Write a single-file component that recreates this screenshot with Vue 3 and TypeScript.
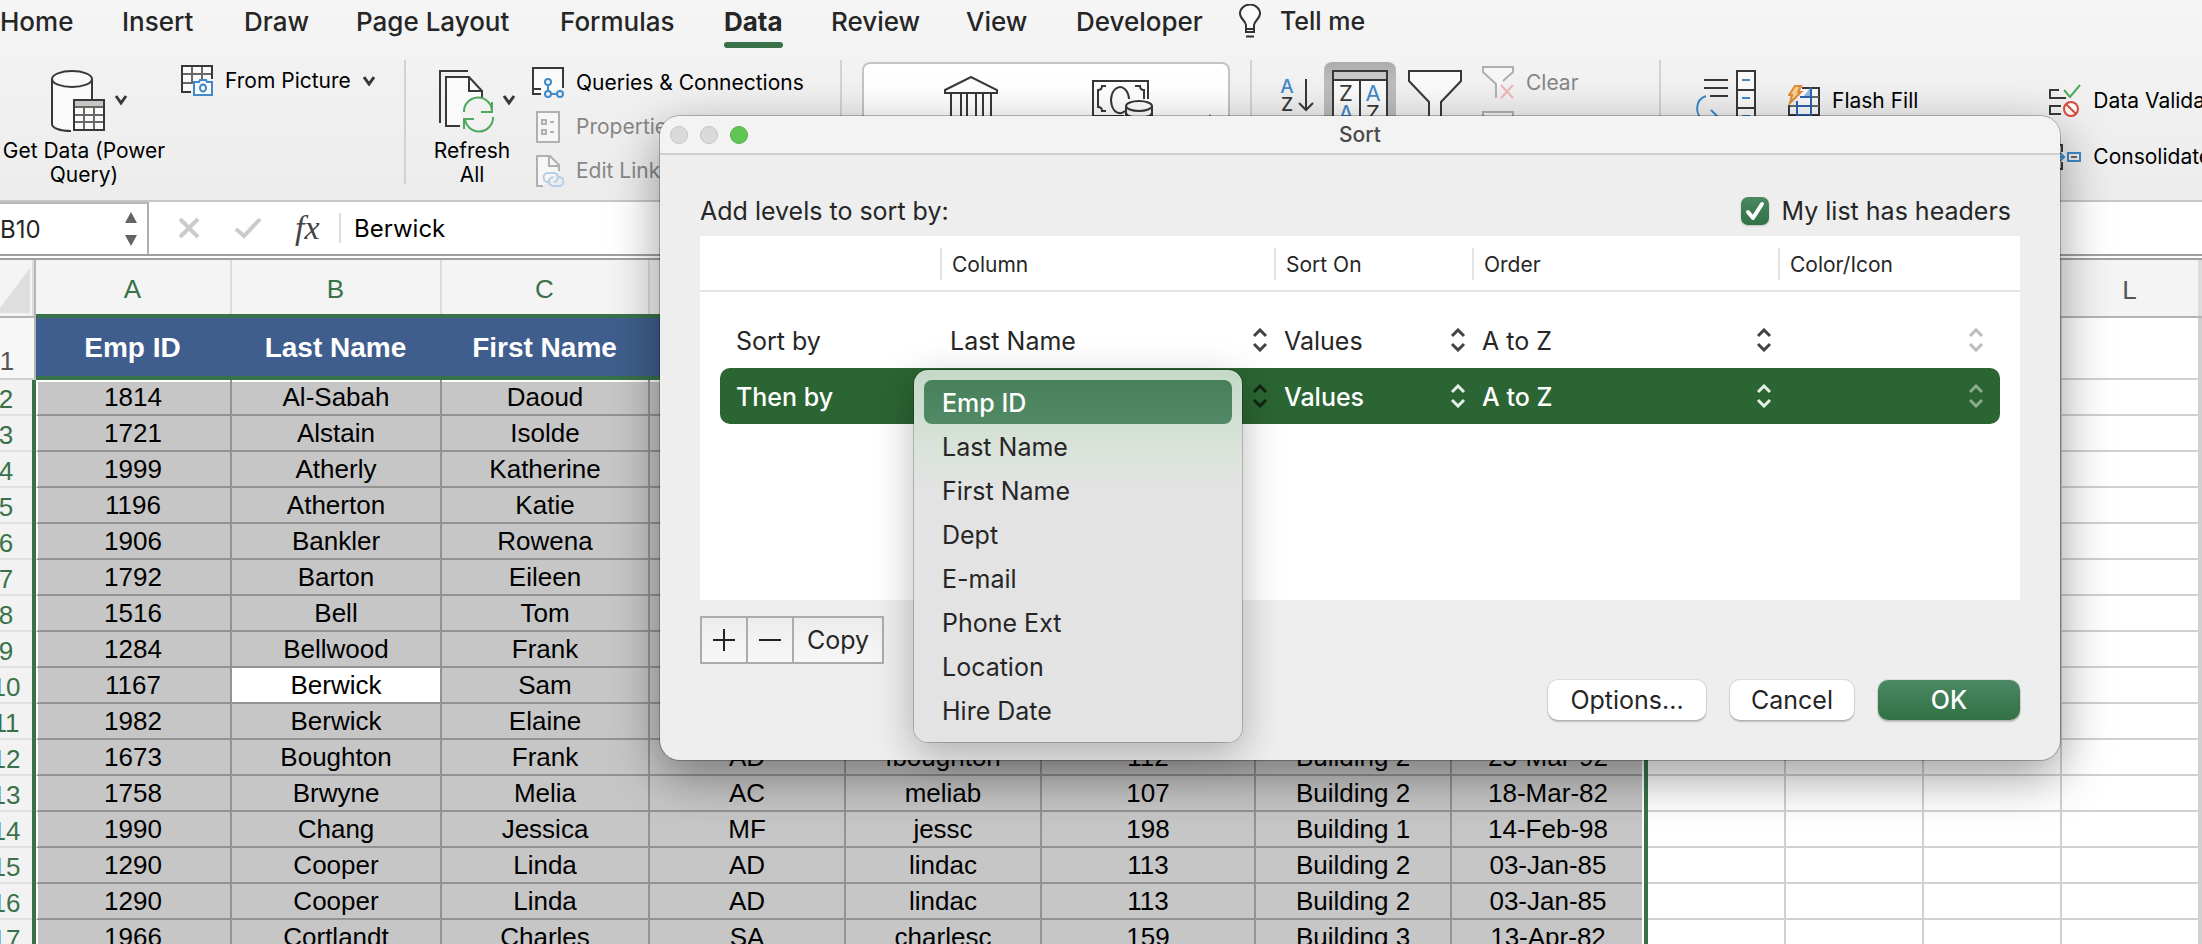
<script setup lang="ts">
import { ref } from 'vue'

interface Tab { label: string; width: number; active?: boolean }
interface Row { n: number; cells: string[] }

const tabs: Tab[] = [
  { label: 'Home', width: 122 },
  { label: 'Insert', width: 122 },
  { label: 'Draw', width: 112 },
  { label: 'Page Layout', width: 204 },
  { label: 'Formulas', width: 164 },
  { label: 'Data', width: 107, active: true },
  { label: 'Review', width: 135 },
  { label: 'View', width: 110 },
  { label: 'Developer', width: 162 },
]

const letters = ['A', 'B', 'C', '', '', '', '', '', '', '', '', 'L', '']
const widths = [196, 210, 208, 196, 196, 214, 196, 196, 138, 138, 138, 138]

const rows: Row[] = [
  { n: 2, cells: ['1814', 'Al-Sabah', 'Daoud'] },
  { n: 3, cells: ['1721', 'Alstain', 'Isolde'] },
  { n: 4, cells: ['1999', 'Atherly', 'Katherine'] },
  { n: 5, cells: ['1196', 'Atherton', 'Katie'] },
  { n: 6, cells: ['1906', 'Bankler', 'Rowena'] },
  { n: 7, cells: ['1792', 'Barton', 'Eileen'] },
  { n: 8, cells: ['1516', 'Bell', 'Tom'] },
  { n: 9, cells: ['1284', 'Bellwood', 'Frank'] },
  { n: 10, cells: ['1167', 'Berwick', 'Sam'] },
  { n: 11, cells: ['1982', 'Berwick', 'Elaine'] },
  { n: 12, cells: ['1673', 'Boughton', 'Frank', 'AD', 'fboughton', '112', 'Building 2', '23-Mar-92'] },
  { n: 13, cells: ['1758', 'Brwyne', 'Melia', 'AC', 'meliab', '107', 'Building 2', '18-Mar-82'] },
  { n: 14, cells: ['1990', 'Chang', 'Jessica', 'MF', 'jessc', '198', 'Building 1', '14-Feb-98'] },
  { n: 15, cells: ['1290', 'Cooper', 'Linda', 'AD', 'lindac', '113', 'Building 2', '03-Jan-85'] },
  { n: 16, cells: ['1290', 'Cooper', 'Linda', 'AD', 'lindac', '113', 'Building 2', '03-Jan-85'] },
  { n: 17, cells: ['1966', 'Cortlandt', 'Charles', 'SA', 'charlesc', '159', 'Building 3', '13-Apr-82'] },
]

const fields = ['Emp ID', 'Last Name', 'First Name', 'Dept', 'E-mail', 'Phone Ext', 'Location', 'Hire Date']
const highlighted = ref('Emp ID')
const hasHeaders = ref(true)
const levels = [
  { label: 'Sort by', column: 'Last Name', selected: false },
  { label: 'Then by', column: '', selected: true },
]
</script>

<template>
  <main class="app">
    <header class="ribbon">
      <nav class="tabs" aria-label="Ribbon">
        <div v-for="t in tabs" :key="t.label" class="tab-slot" :style="{ width: t.width + 'px' }">
          <button class="tab" :class="{ active: t.active }">{{ t.label }}</button>
        </div>
        <button class="tellme">
          <svg width="24" height="34" viewBox="0 0 24 34" fill="#fafafa" stroke="#333" stroke-width="2">
            <path d="M8 25v-4C8 17 2 15 2 9.500A9.500 8.500 0 0 1 22 9.500C22 15 16 17 16 21v7H8v-3h8M8 32.500h8" />
          </svg>
          Tell me
        </button>
      </nav>

      <div class="tools">
        <section class="group g-data">
          <button class="big get-data">
            <svg width="82" height="64" viewBox="0 0 82 64" fill="none" stroke="#383838" stroke-width="2">
              <path d="M1 9v44c0 4 8 8 20 8V61h20V9" fill="#fafafa" stroke="none" />
              <path d="M1 9v45c0 4 8 7 19 7M41 9v20" />
              <ellipse cx="21" cy="9" rx="20" ry="8" fill="#fafafa" />
              <path d="M23 30h30v30H23z" fill="#fafafa" /><path d="M24 31h28v5H24z" fill="#c8c6c4" stroke="none" />
              <path d="M23 37h30M23 45h30M23 52h30M33 37v23M43 37v23" stroke="#6b6966" /><path d="M23 30h30v30H23z" />
              <path d="M65 26l5 7 5-7" stroke-width="3" />
            </svg>
            <span>Get Data (Power Query)</span>
          </button>
          <button class="line from-picture">
            <svg width="32" height="32" viewBox="0 0 32 32" fill="none" stroke="#383838" stroke-width="2">
              <path d="M10 27H1V1h30v13" fill="#fafafa" /><path d="M2 9h28M2 18h10M11 2v16M21 2v12" stroke="#6b6966" />
              <path d="M13 17h5l1-2h6l1 2h5v13H13z" fill="#fafafa" stroke="#4189c9" /><ellipse cx="22" cy="23" rx="3" ry="3.500" stroke="#4189c9" />
            </svg>
            <span>From Picture</span>
            <svg width="12" height="10" viewBox="0 0 12 10" fill="none" stroke="#383838" stroke-width="3"><path d="M1 1l5 7 5-7" /></svg>
          </button>
        </section>

        <section class="group g-queries">
          <button class="big refresh">
            <svg width="82" height="64" viewBox="0 0 82 64" fill="none" stroke="#383838" stroke-width="2">
              <path d="M1 53V1h28" /><path d="M21 56H7V7h23l13 14v9" fill="#fafafa" /><path d="M30 7v14h13" />
              <circle cx="39" cy="45" r="17" fill="#f2f2f2" stroke="none" />
              <path d="M25 42a14 14 0 0 1 28-1M53 32v10H42M54 47a14 14 0 0 1-28 1M25 59V49h10" stroke="#4fa95c" />
              <path d="M65 26l5 7 5-7" stroke-width="3" />
            </svg>
            <span>Refresh<br />All</span>
          </button>
          <div class="stack">
            <button class="line">
              <svg width="32" height="32" viewBox="0 0 32 32" fill="none" stroke="#383838" stroke-width="2">
                <path d="M9 27H1V1h30v20" fill="#fafafa" /><path d="M2 22h7" />
                <g stroke="#4189c9"><circle cx="16" cy="15" r="3" /><circle cx="16" cy="27" r="3" /><circle cx="28" cy="27" r="3" /><path d="M16 18v6M19 27h6" /></g>
              </svg>
              <span>Queries &amp; Connections</span>
            </button>
            <button class="line" disabled>
              <svg width="32" height="32" viewBox="0 0 32 32" fill="none" stroke="#b0b0b0" stroke-width="2">
                <path d="M5 1h22v30H5z" fill="#f6f6f6" /><path d="M10 9h4v4h-4zM10 19h4v4h-4zM18 11h4M18 21h4" />
              </svg>
              <span>Properties</span>
            </button>
            <button class="line" disabled>
              <svg width="32" height="32" viewBox="0 0 32 32" fill="none" stroke="#b0b0b0" stroke-width="2">
                <path d="M11 31H5V1h13l9 9v6" fill="#f6f6f6" /><path d="M17 1v10h10" />
                <path d="M18 27h-2a4.500 4.500 0 0 1 0-9h5a4.500 4.500 0 0 1 1 9M25 22h2a4.500 4.500 0 0 1 0 9h-5a4.500 4.500 0 0 1-1-9" stroke="#b3cfe8" />
              </svg>
              <span>Edit Links</span>
            </button>
          </div>
        </section>

        <section class="group g-types">
          <div class="gallery">
            <button class="icon" aria-label="Stocks">
              <svg width="54" height="52" viewBox="0 0 54 52" fill="none" stroke="#383838" stroke-width="2">
                <path d="M1 14L27 1l26 13v3H1zM7 17v24M17 17v24M23 17v24M32 17v24M39 17v24M47 17v24M4 41h46v6H4z" />
              </svg>
            </button>
            <button class="icon" aria-label="Currencies">
              <svg width="62" height="46" viewBox="0 0 62 46" fill="none" stroke="#383838" stroke-width="2">
                <path d="M32 36H1V1h55v18M14 6h-4c0 3-2 4-4 4v17c2 0 4 1 4 4h4M43 6h5c0 3 2 4 4 4v9" /><path d="M33 31a9 13 0 1 1 4-12" />
                <path d="M34 26v18h26V26" fill="#fff" /><ellipse cx="47" cy="26" rx="13" ry="5" fill="#fff" /><path d="M34 33c2 6 24 6 26 0" />
              </svg>
            </button>
            <svg class="more" width="10" height="8" viewBox="0 0 10 8" fill="#383838"><path d="M1 0l6 5H3z" /></svg>
          </div>
        </section>

        <section class="group g-sort">
          <button class="icon az" aria-label="Sort ascending">
            <svg width="34" height="36" viewBox="0 0 34 36" fill="none" stroke="#383838" stroke-width="2">
              <text class="glyph small blue" x="7" y="15">A</text><text class="glyph small" x="7" y="33">Z</text>
              <path d="M26 1v31M19 25l7 7 7-7" />
            </svg>
          </button>
          <button class="icon sort-on" aria-label="Sort">
            <svg width="56" height="60" viewBox="0 0 56 60" fill="none" stroke="#383838" stroke-width="2">
              <path d="M1 1h54v58H1z" fill="#fafafa" /><path d="M2 2h52v7H2z" fill="#c8c6c4" stroke="none" /><path d="M1 1h54v58H1zM1 10h54M28 10v49" />
              <text class="glyph" x="14" y="31">Z</text><text class="glyph blue" x="14" y="51">A</text>
              <text class="glyph blue" x="41" y="31">A</text><text class="glyph" x="41" y="51">Z</text>
            </svg>
          </button>
          <button class="icon filter" aria-label="Filter">
            <svg width="54" height="60" viewBox="0 0 54 60" fill="#fafafa" stroke="#383838" stroke-width="2"><path d="M1 1h52v10L33 32v26H21V32L1 11z" /></svg>
          </button>
          <div class="stack">
            <button class="line" disabled>
              <svg width="32" height="34" viewBox="0 0 32 34" fill="none" stroke="#b0b0b0" stroke-width="2">
                <path d="M14 32V18L1 6V1h30v5l-10 9" fill="#f6f6f6" /><path d="M19 19l12 13M31 19L19 32" stroke="#f0b6b6" />
              </svg>
              <span>Clear</span>
            </button>
            <button class="line" disabled aria-label="Reapply">
              <svg width="32" height="32" viewBox="0 0 32 32" fill="#f6f6f6" stroke="#b0b0b0" stroke-width="2"><path d="M1 1h30v5L18 18v12h-4V18L1 6z" /></svg>
            </button>
          </div>
        </section>

        <section class="group g-tools">
          <button class="icon columns" aria-label="Text to Columns">
            <svg width="60" height="60" viewBox="0 0 60 60" fill="none" stroke="#383838" stroke-width="2">
              <path d="M8 10h24M8 18h24M14 26h18" /><path d="M10 26C-2 30-1 46 8 50M15 40l8 8-8 8" stroke="#4189c9" />
              <path d="M41 1h18v58H41z" fill="#fafafa" /><path d="M41 20h18M41 38h18" /><path d="M46 10h8M46 28h8M46 46h8" stroke="#4189c9" />
            </svg>
          </button>
          <button class="line flash">
            <svg width="32" height="32" viewBox="0 0 32 32" fill="none" stroke="#383838" stroke-width="2">
              <path d="M14 3h17v27H1V21h8" fill="#fafafa" /><path d="M23 12h8M23 21h8M2 21h8" stroke="#6b6966" />
              <path d="M15 12l8-10v10z" fill="#8fbbe6" stroke="none" /><path d="M9 16v14h14V3M9 21h14M12 12h11" stroke="#2b63b0" />
              <path d="M7 1h6l-3 6h3L2 18l2-8H1z" fill="#fbd38f" stroke="#e08a3c" />
            </svg>
            <span>Flash Fill</span>
          </button>
          <div class="stack validate">
            <button class="line">
              <svg width="32" height="34" viewBox="0 0 32 34" fill="none" stroke="#383838" stroke-width="2">
                <path d="M10 6H1v8h16M12 22H1v8h11" /><path d="M15 6l6 7L31 1" stroke="#4fa95c" />
                <circle cx="22" cy="25" r="7" stroke="#d9483b" fill="#fafafa" /><path d="M17 20l10 10" stroke="#d9483b" />
              </svg>
              <span>Data Validation</span>
            </button>
            <button class="line">
              <svg width="32" height="34" viewBox="0 0 32 34" fill="none" stroke="#383838" stroke-width="2">
                <path d="M8 5h5v7M13 22v7H8" /><path d="M6 17h9M10 12l5 5-5 5M19 13h12v8H19z" stroke="#4189c9" /><path d="M22 17h6" stroke="#6b6966" />
              </svg>
              <span>Consolidate</span>
            </button>
          </div>
        </section>
      </div>
    </header>

    <div class="formula-bar">
      <input class="name-box" value="B10" aria-label="Name box" />
      <div class="spin">
        <svg width="14" height="34" viewBox="0 0 14 34" fill="#636363"><path d="M7 0l6 11H1zM7 34l6-11H1z" /></svg>
      </div>
      <svg class="cancel-x" width="22" height="22" viewBox="0 0 22 22" stroke="#cbcbcb" stroke-width="4"><path d="M2 2l18 18M20 2L2 20" /></svg>
      <svg class="accept" width="28" height="22" viewBox="0 0 28 22" fill="none" stroke="#cbcbcb" stroke-width="4"><path d="M2 12l8 7L26 2" /></svg>
      <span class="fx">fx</span>
      <input class="formula" value="Berwick" aria-label="Formula" />
    </div>

    <table class="sheet">
      <colgroup>
        <col class="c-num" />
        <col v-for="(w, i) in widths" :key="i" :style="{ width: w + 'px' }" />
        <col />
      </colgroup>
      <thead>
        <tr>
          <th class="corner"><svg width="32" height="46" viewBox="0 0 32 46"><path d="M32 1v45H-2z" fill="#dedede" /></svg></th>
          <th v-for="(l, i) in letters" :key="i" :class="{ sel: i < 8 }">{{ l }}</th>
        </tr>
      </thead>
      <tbody>
        <tr class="title-row">
          <th>1</th>
          <td class="head">Emp ID</td><td class="head">Last Name</td><td class="head">First Name</td>
          <td v-for="k in 5" :key="k" class="head"></td>
          <td v-for="k in 5" :key="'e' + k"></td>
        </tr>
        <tr v-for="r in rows" :key="r.n">
          <th class="sel">{{ r.n }}</th>
          <td v-for="i in 13" :key="i" :class="{ pick: i <= 8, first: i === 1, last: i === 8, current: r.n === 10 && i === 2, top: r.n === 2 && i <= 8 }">{{ r.cells[i - 1] }}</td>
        </tr>
      </tbody>
    </table>

    <section class="dialog" role="dialog" aria-labelledby="dlg-title">
      <div class="titlebar">
        <button class="light" aria-label="Close"></button>
        <button class="light" aria-label="Minimize"></button>
        <button class="light green" aria-label="Zoom"></button>
        <h2 id="dlg-title">Sort</h2>
      </div>
      <div class="content">
        <div class="intro">
          <span>Add levels to sort by:</span>
          <label><input v-model="hasHeaders" type="checkbox" />
            <svg width="28" height="28" viewBox="0 0 28 28" fill="none" stroke="#fff" stroke-width="4" stroke-linecap="round" stroke-linejoin="round"><path d="M7 15l5 6 9-14" /></svg>
            My list has headers</label>
        </div>
        <div class="panel">
          <div class="cols head-cols">
            <span></span><span>Column</span><span>Sort On</span><span>Order</span><span>Color/Icon</span>
          </div>
          <div class="levels">
            <div v-for="l in levels" :key="l.label" class="cols level" :class="{ on: l.selected }">
              <span class="lab">{{ l.label }}</span>
              <span class="pop"><select :aria-label="l.label + ' column'"><option>{{ l.column }}</option></select>
                <svg width="16" height="24" viewBox="0 0 16 24" fill="none" :class="{ pressed: l.selected }"><path d="M2 8l6-6 6 6M2 16l6 6 6-6" /></svg></span>
              <span class="pop"><select :aria-label="l.label + ' sort on'"><option>Values</option></select>
                <svg width="16" height="24" viewBox="0 0 16 24" fill="none"><path d="M2 8l6-6 6 6M2 16l6 6 6-6" /></svg></span>
              <span class="pop"><select :aria-label="l.label + ' order'"><option>A to Z</option></select>
                <svg width="16" height="24" viewBox="0 0 16 24" fill="none"><path d="M2 8l6-6 6 6M2 16l6 6 6-6" /></svg></span>
              <span class="pop"><select disabled :aria-label="l.label + ' color or icon'"></select>
                <svg class="dim" width="16" height="24" viewBox="0 0 16 24" fill="none"><path d="M2 8l6-6 6 6M2 16l6 6 6-6" /></svg></span>
            </div>
          </div>
        </div>
        <div class="edit">
          <button aria-label="Add level"><svg width="22" height="22" viewBox="0 0 22 22" stroke="#222" stroke-width="2"><path d="M11 0v22M0 11h22" /></svg></button>
          <button aria-label="Remove level"><svg width="22" height="22" viewBox="0 0 22 22" stroke="#222" stroke-width="2"><path d="M0 11h22" /></svg></button>
          <button class="copy">Copy</button>
        </div>
        <div class="actions">
          <button class="opt">Options...</button>
          <button class="cancel">Cancel</button>
          <button class="ok">OK</button>
        </div>
      </div>
      <ul class="menu" role="listbox" aria-label="Column">
        <li v-for="f in fields" :key="f" role="option" :aria-selected="f === highlighted" :class="{ hot: f === highlighted }" @mouseenter="highlighted = f">{{ f }}</li>
      </ul>
    </section>
  </main>
</template>

<style>
html, body { background: #fff; }
</style>

<style scoped>
* { box-sizing: border-box; }
.app { position: relative; height: 100vh; overflow: hidden; font-family: Inter, "Liberation Sans", sans-serif; color: #262626; }
button, input, select { font: inherit; color: inherit; border: 0; background: none; padding: 0; margin: 0; border-radius: 0; }
svg { display: block; flex: none; }

.ribbon { height: 202px; background: linear-gradient(#f5f5f5, #ececec); border-bottom: 2px solid #c6c6c6; overflow: hidden; }
.tabs { display: flex; height: 48px; white-space: nowrap; font-size: 26px; font-weight: 500; }
.tab-slot, .tellme { flex: none; }
.tab { height: 48px; padding-bottom: 6px; }
.tab.active { position: relative; font-weight: 700; }
.tab.active::after { content: ""; position: absolute; left: 0; right: 0; bottom: 0; height: 6px; border-radius: 3px; background: #3a7048; }
.tellme { display: flex; align-items: center; gap: 18px; height: 42px; font-size: 25px; }

.tools { display: flex; padding-top: 12px; height: 140px; font-size: 21px; line-height: 24px; color: #000; white-space: nowrap; }
.group { display: flex; flex: none; align-items: flex-start; height: 124px; border-right: 2px solid #d2d2d2; }
.g-data { width: 406px; }
.g-queries { width: 436px; }
.g-types { width: 410px; }
.g-sort { width: 409px; }
.g-tools { border-right: 0; }
.big { display: flex; flex-direction: column; align-items: center; padding-top: 10px; }
.big svg { margin: 0 0 5px 15px; }
.get-data { width: 168px; white-space: normal; }
.refresh { width: 126px; padding-left: 6px; }
.line { display: flex; align-items: center; gap: 12px; height: 44px; }
.line:disabled { color: #868686; }
.from-picture { height: 42px; margin-left: 13px; }
.stack { display: flex; flex-direction: column; padding-top: 1px; }
.gallery { display: flex; width: 368px; height: 140px; margin: 2px 0 0 20px; padding: 12px 0 0 80px; border: 2px solid #c4c4c4; border-radius: 8px; background: #fff; }
.gallery .icon + .icon { margin: 4px 0 0 94px; }
.icon { display: flex; align-items: flex-start; }
.glyph { font-size: 22px; text-anchor: middle; fill: #383838; stroke: none; }
.glyph.small { font-size: 19px; font-weight: 500; }
.glyph.blue { fill: #4189c9; }
.more { margin: 38px 0 0 54px; }
.az { margin: 18px 0 0 28px; }
.sort-on { width: 72px; height: 100px; margin: 2px 0 0 10px; padding: 8px; border-radius: 8px 8px 0 0; background: linear-gradient(#adadad, #bcbcbc 20%); }
.filter { margin: 10px 20px 0 12px; }
.columns { margin: 10px 32px 0 35px; }
.flash { margin-top: 19px; }
.validate { margin: 18px 0 0 131px; gap: 12px; }

.formula-bar { display: flex; align-items: center; height: 58px; background: #fff; border-bottom: 6px double #a0a0a0; font-size: 24px; }
.name-box { width: 120px; height: 52px; border-top: 2px solid #b8b8b8; }
.spin { display: flex; align-items: center; width: 29px; height: 52px; padding-left: 4px; border-top: 2px solid #b8b8b8; border-right: 2px solid #b0b0b0; }
.cancel-x { margin-left: 29px; }
.accept { margin-left: 34px; }
.fx { width: 44px; margin-left: 33px; font: italic 34px/32px "Liberation Serif", serif; color: #444; }
.formula { flex: 1; min-width: 0; height: 30px; padding-left: 13px; border-left: 2px solid #ddd; color: #000; }

.sheet { width: calc(100% + 20px); margin-left: -20px; table-layout: fixed; border-collapse: separate; border-spacing: 0; font: 26px/34px "Liberation Sans", Arial, sans-serif; color: #000; }
.c-num { width: 56px; }
.sheet th, .sheet td { padding: 0; height: 36px; text-align: center; overflow: hidden; white-space: nowrap; border-right: 2px solid #d0d0d0; border-bottom: 2px solid #d0d0d0; }
.sheet th { font-weight: 400; color: #555; background: #f7f7f7; }
.sheet thead th { height: 58px; padding: 3px 3px 0 0; border-right: 0; border-bottom-color: #b4b4b4; background: linear-gradient(#dcdcdc, #dcdcdc) right / 2px 100% no-repeat, #f4f4f4; }
.sheet thead th.sel { color: #39724a; border-bottom: 4px solid #39724a; }
.sheet thead th.corner { padding: 0; border-right: 2px solid #b4b4b4; }
.corner svg { margin: 4px 0 0 18px; }
.sheet .title-row th, .sheet .title-row td { height: 62px; }
.sheet .title-row th { vertical-align: bottom; border-right-color: #b4b4b4; }
.sheet td.head { padding: 2px 3px 0 0; font-size: 28px; font-weight: 700; color: #fff; background: #405e8d; border-right: 0; border-bottom: 4px solid #39724a; }
.sheet tbody th.sel { padding-top: 2px; line-height: 32px; color: #39724a; background: linear-gradient(#e0e0e0, #e0e0e0) bottom / 100% 2px no-repeat, #f2f2f2; border-right: 4px solid #39724a; border-bottom: 0; }
.sheet td.pick { background: #c6c6c6; border-color: #939393; }
.sheet td.first { padding-right: 2px; border-left: 2px solid #fff; }
.sheet td.top { box-shadow: inset 0 2px #fff; }
.sheet td.last { padding-bottom: 2px; border-right: 4px solid #39724a; border-bottom: 0; background: linear-gradient(#fff, #fff) right / 2px 100% no-repeat, linear-gradient(#939393, #939393) bottom / 100% 2px no-repeat, #c6c6c6; }
.sheet td.current { background: #fff; }

.dialog { position: absolute; top: 116px; left: 660px; right: 142px; height: 644px; border-radius: 20px; background: #eee; box-shadow: 0 0 0 1px rgba(0, 0, 0, .25), 0 16px 50px rgba(0, 0, 0, .4); font-size: 25px; line-height: 30px; }
.titlebar { display: flex; align-items: center; gap: 12px; height: 39px; padding: 0 100px 0 10px; border-bottom: 2px solid #d0d0d0; border-radius: 20px 20px 0 0; background: #f3f3f3; }
.titlebar h2 { flex: 1; margin: 0; text-align: center; font-size: 21px; font-weight: 500; color: #4a4a4a; }
.light { width: 18px; height: 18px; border: 1px solid #c4c4c4; border-radius: 50%; background: #dadada; }
.light.green { border-color: #53b045; background: #61c554; }
.content { padding: 0 40px; }
.intro { display: flex; align-items: center; justify-content: space-between; height: 81px; padding: 30px 9px 0 0; }
.intro label { display: flex; align-items: center; position: relative; gap: 13px; }
.intro input { appearance: none; width: 28px; height: 28px; border-radius: 7px; background: linear-gradient(#4a8961, #327145); box-shadow: 0 1px 2px rgba(0, 0, 0, .2); }
.intro label svg { position: absolute; left: 0; }
.panel { height: 364px; background: #fff; }
.cols { display: grid; grid-template-columns: 240px 334px 198px 306px 1fr; }
.head-cols { height: 56px; padding-top: 12px; border-bottom: 2px solid #e3e3e3; font-size: 21px; line-height: 34px; }
.head-cols span { height: 32px; }
.head-cols span + span { padding-left: 10px; border-left: 2px solid #e2e2e2; }
.levels { padding: 20px 20px 0; }
.level { align-items: center; height: 56px; grid-template-columns: 230px 334px 198px 306px 1fr; }
.lab { padding: 2px 0 0 16px; }
.pop { position: relative; display: flex; align-items: center; height: 56px; }
.pop select { appearance: none; flex: 1; min-width: 0; height: 40px; padding-top: 2px; opacity: 1; }
.pop svg { margin: 0 16px 0 0; stroke: #444; stroke-width: 3; pointer-events: none; }
.pop .dim { opacity: .35; }
.level.on { border-radius: 10px; background: #2b6533; color: #fff; font-weight: 500; }
.on .pop svg { stroke: #e6efe7; }
.on .pop svg.pressed { stroke: #102613; }
.on .pop svg.dim { opacity: .5; }
.edit { display: flex; width: 184px; height: 48px; margin-top: 16px; border: 2px solid #acacac; background: linear-gradient(#ededed, #f7f7f7); }
.edit button { display: flex; align-items: center; justify-content: center; width: 46px; border-right: 2px solid #acacac; }
.edit .copy { flex: 1; border-right: 0; }
.actions { display: flex; justify-content: flex-end; gap: 24px; margin-top: 16px; }
.actions button { height: 40px; border-radius: 10px; background: #fff; box-shadow: 0 0 0 1px rgba(0, 0, 0, .08), 0 2px 2px rgba(0, 0, 0, .2); }
.opt { width: 158px; }
.cancel { width: 124px; }
.actions .ok { width: 142px; color: #fff; font-weight: 500; background: linear-gradient(#4a8963, #327144); }
.menu { position: absolute; left: 254px; top: 254px; width: 328px; margin: 0; padding: 10px; list-style: none; border-radius: 14px; background: linear-gradient(#c5d9c8, #dae3da 80px, #e3e3e3 120px); box-shadow: 0 0 0 1px rgba(0, 0, 0, .2), 0 12px 40px rgba(0, 0, 0, .28); }
.menu li { height: 44px; padding-left: 18px; line-height: 46px; }
.menu .hot { border-radius: 8px; color: #fff; font-weight: 500; background: linear-gradient(#48805a, #528a66); }
</style>
